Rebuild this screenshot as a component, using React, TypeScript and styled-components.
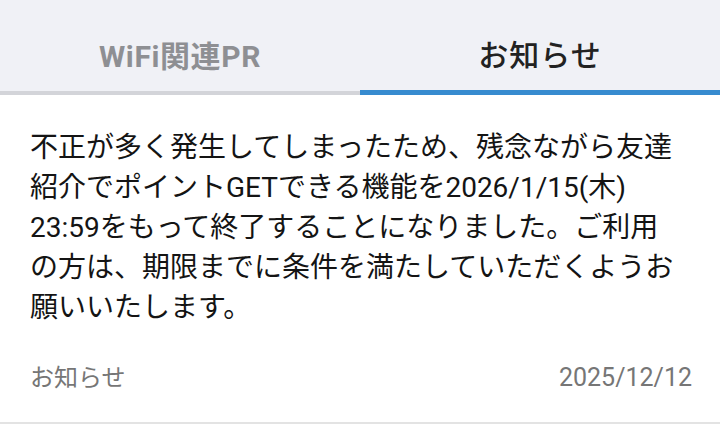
import React from 'react'
import styled, { createGlobalStyle } from 'styled-components'

const GlobalStyle = createGlobalStyle`
  html, body {
    margin: 0;
    padding: 0;
    background: #fff;
  }
  body {
    font-family: Roboto, "Noto Sans CJK JP", sans-serif;
    -webkit-font-smoothing: antialiased;
  }
`

const TabBar = styled.nav`
  display: flex;
  background: #f0f1f6;
`

const Tab = styled.div<{ $active?: boolean }>`
  flex: 1;
  height: 95px;
  box-sizing: border-box;
  display: flex;
  align-items: center;
  justify-content: center;
  padding-top: 16px;
  font-size: 30px;
  letter-spacing: ${({ $active }) => ($active ? '1px' : '0.6px')};
  font-weight: ${({ $active }) => ($active ? 500 : 700)};
  color: ${({ $active }) => ($active ? '#222' : '#8e8f93')};
  border-bottom: ${({ $active }) =>
    $active ? '5px solid #378bcf' : '4px solid #d3d4d9'};
`

const Article = styled.article`
  padding: 33px 35px 0 30px;
  border-bottom: 2px solid #e3e3e3;
`

const Body = styled.p`
  margin: 0;
  font-size: 28px;
  line-height: 40px;
  color: #141414;
  line-break: strict;
`

const Meta = styled.div`
  display: flex;
  justify-content: space-between;
  align-items: center;
  box-sizing: border-box;
  height: 94px;
  padding: 36px 28px 30px 0;
  margin-right: -35px;
  color: #767676;
  line-height: 28px;
`

const Category = styled.span`
  font-size: 24px;
`

const DateText = styled.span`
  font-size: 25px;
`

export default function App() {
  return (
    <>
      <GlobalStyle />
      <TabBar>
        <Tab>WiFi関連PR</Tab>
        <Tab $active>お知らせ</Tab>
      </TabBar>
      <Article>
        <Body>
          不正が多く発生してしまったため、残念ながら友達紹介でポイントGETできる機能を2026/1/15(木) 23:59をもって終了することになりました。ご利用の方は、期限までに条件を満たしていただくようお願いいたします。
        </Body>
        <Meta>
          <Category>お知らせ</Category>
          <DateText>2025/12/12</DateText>
        </Meta>
      </Article>
    </>
  )
}
